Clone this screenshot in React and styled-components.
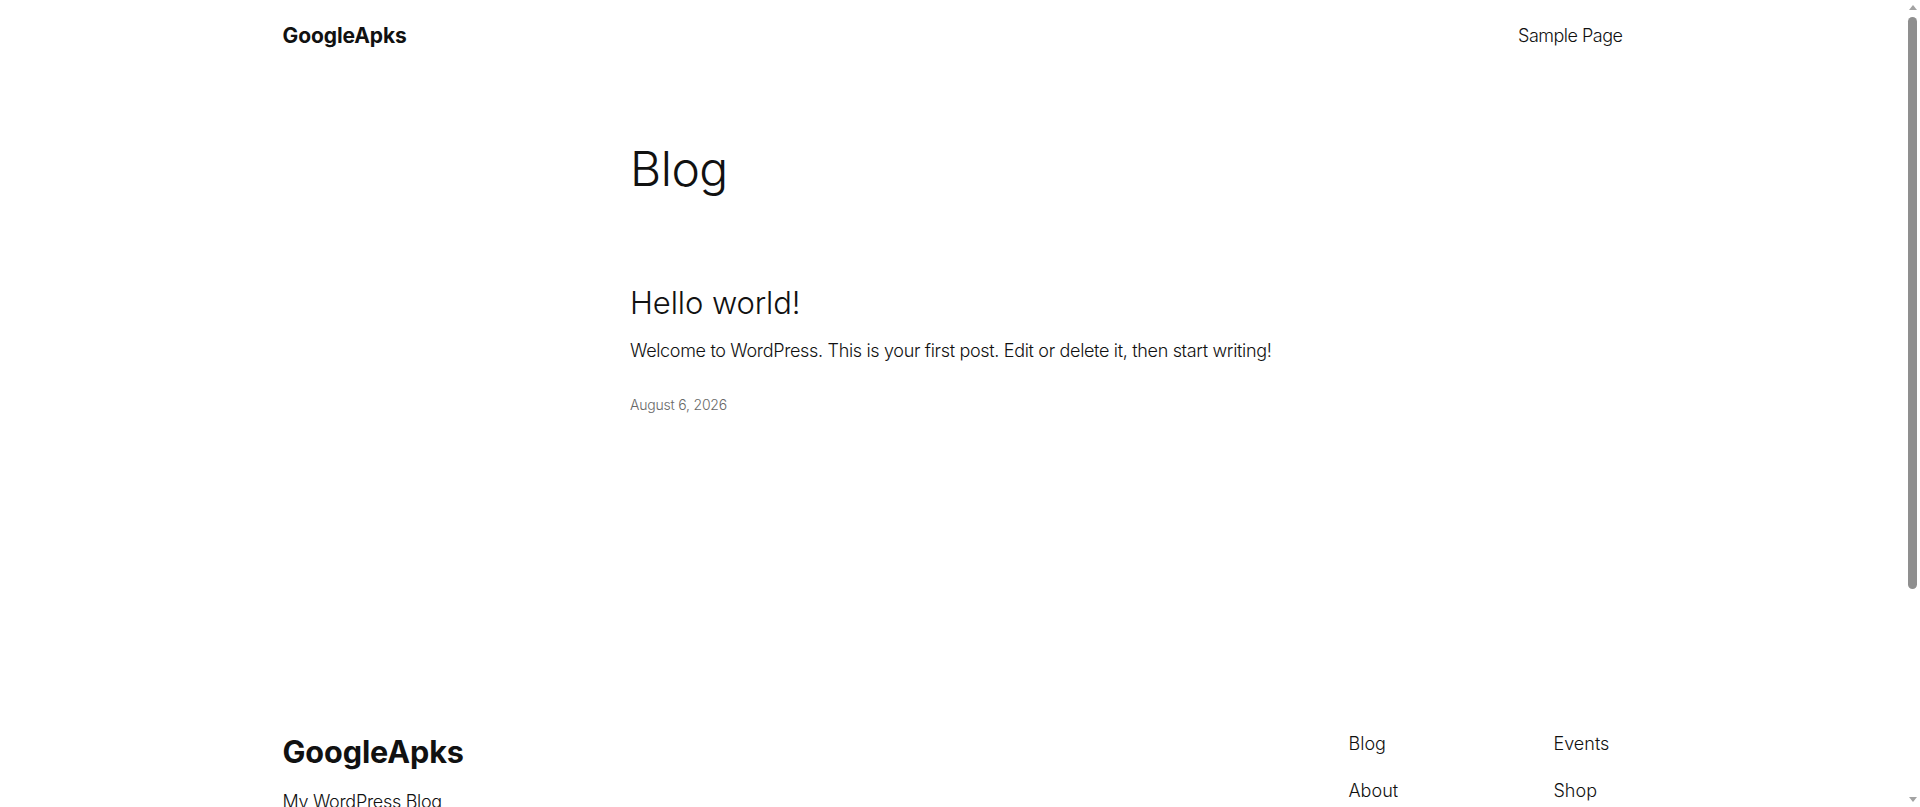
import React from "react";
import styled, { createGlobalStyle } from "styled-components";

const Global = createGlobalStyle`
  html, body { margin: 0; padding: 0; background: #ffffff; }
  body {
    font-family: Inter, "Noto Sans", "Liberation Sans", sans-serif;
    color: #111111;
    -webkit-font-smoothing: antialiased;
    padding-right: 15px;
  }
  a { color: inherit; text-decoration: none; }
  * { box-sizing: border-box; }
`;

/* drawn browser scrollbar, overlaid at the right edge */
const Scrollbar = styled.div`
  position: fixed;
  top: 0;
  right: 0;
  width: 15px;
  height: 100vh;
  background: #ffffff;
  display: flex;
  flex-direction: column;
  align-items: center;
`;

const Arrow = styled.div`
  width: 0;
  height: 0;
  border-left: 4px solid transparent;
  border-right: 4px solid transparent;
  ${(p) =>
    p.$down
      ? "border-top: 5px solid #a3a3a3; margin-top: auto; margin-bottom: 5px;"
      : "border-bottom: 5px solid #a3a3a3; margin-top: 5px;"}
`;

const Thumb = styled.div`
  width: 9px;
  height: 572px;
  margin-top: 7px;
  border-radius: 5px;
  background: #8f8f8f;
`;

const Wide = styled.div`
  max-width: 1340px;
  margin: 0 auto;
`;

const Header = styled.header`
  padding: 22px 0;
`;

const HeaderRow = styled(Wide)`
  display: flex;
  align-items: center;
  justify-content: space-between;
`;

const SiteTitle = styled.a`
  font-size: ${(p) => (p.$big ? "30.6px" : "21px")};
  font-weight: 700;
  line-height: ${(p) => (p.$big ? "36px" : "28px")};
  letter-spacing: -0.1px;
  display: block;
`;

const NavLink = styled.a`
  font-size: 18px;
  font-weight: 300;
  line-height: 28px;
  letter-spacing: -0.5px;
`;

const Main = styled.main`
  width: 645px;
  margin: 0 auto;
  padding: 68px 0 315px;
`;

const PageTitle = styled.h1`
  margin: 0;
  font-size: 48px;
  font-weight: 300;
  line-height: 1.2;
  letter-spacing: -0.5px;
`;

const Post = styled.article`
  margin-top: 86px;
  display: flex;
  flex-direction: column;
`;

const PostTitle = styled.h2`
  margin: 0;
  font-size: 31px;
  font-weight: 300;
  line-height: 1.2;
  letter-spacing: -0.1px;
`;

const Excerpt = styled.p`
  margin: 16px 0 0;
  font-size: 18px;
  font-weight: 300;
  line-height: 1.6;
  letter-spacing: -0.33px;
`;

const PostDate = styled.time`
  margin-top: 29.5px;
  font-size: 14px;
  font-weight: 300;
  line-height: 1.4;
  letter-spacing: -0.2px;
  color: #686868;
`;

const Footer = styled.footer`
  padding-bottom: 64px;
`;

const FooterTop = styled(Wide)`
  display: flex;
  justify-content: space-between;
  align-items: flex-start;
`;

const Brand = styled.div`
  padding-top: 4px;
  display: flex;
  flex-direction: column;
  gap: 18px;
`;

const Tagline = styled.p`
  margin: 0;
  font-size: 18px;
  font-weight: 300;
  line-height: 1.6;
  letter-spacing: -0.3px;
`;

const FooterNav = styled.nav`
  width: 274px;
  display: grid;
  grid-template-columns: 205px 1fr;
`;

const LinkColumn = styled.ul`
  list-style: none;
  margin: 0;
  padding: 0;
  display: flex;
  flex-direction: column;
  gap: 19px;
`;

const FooterLink = styled.a`
  font-size: 18px;
  font-weight: 300;
  line-height: 1.6;
  display: block;
`;

const Separator = styled.hr`
  border: none;
  border-top: 1px solid #dddddd;
  margin: 90px 0 0;
`;

const Credits = styled(Wide)`
  display: flex;
  justify-content: space-between;
  padding-top: 24px;
  font-size: 14px;
  font-weight: 300;
  line-height: 1.4;
`;

const columns = [
  ["Blog", "About", "FAQs", "Authors"],
  ["Events", "Shop", "Patterns", "Themes"],
];

export default function App() {
  return (
    <>
      <Global />
      <Header>
        <HeaderRow>
          <SiteTitle href="#">GoogleApks</SiteTitle>
          <nav>
            <NavLink href="#">Sample Page</NavLink>
          </nav>
        </HeaderRow>
      </Header>
      <Main>
        <PageTitle>Blog</PageTitle>
        <Post>
          <PostTitle>Hello world!</PostTitle>
          <Excerpt>
            Welcome to WordPress. This is your first post. Edit or delete it,
            then start writing!
          </Excerpt>
          <PostDate>August 6, 2026</PostDate>
        </Post>
      </Main>
      <Footer>
        <FooterTop>
          <Brand>
            <SiteTitle $big href="#">GoogleApks</SiteTitle>
            <Tagline>My WordPress Blog</Tagline>
          </Brand>
          <FooterNav>
            {columns.map((col, i) => (
              <LinkColumn key={i}>
                {col.map((l) => (
                  <li key={l}>
                    <FooterLink href="#">{l}</FooterLink>
                  </li>
                ))}
              </LinkColumn>
            ))}
          </FooterNav>
        </FooterTop>
        <Wide>
          <Separator />
        </Wide>
        <Credits>
          <span>Twenty Twenty-Five</span>
          <span>Designed with WordPress</span>
        </Credits>
      </Footer>
      <Scrollbar aria-hidden="true">
        <Arrow />
        <Thumb />
        <Arrow $down />
      </Scrollbar>
    </>
  );
}
